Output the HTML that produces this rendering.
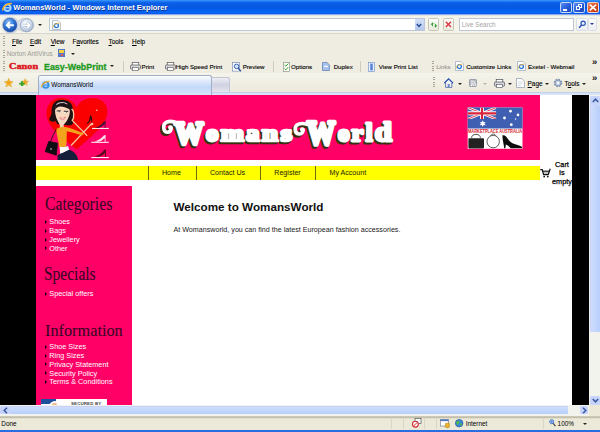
<!DOCTYPE html>
<html>
<head>
<meta charset="utf-8">
<title>WomansWorld - Windows Internet Explorer</title>
<style>
*{margin:0;padding:0;box-sizing:border-box;}
html,body{width:600px;height:432px;overflow:hidden;background:#ece9d8;}
body{font-family:"Liberation Sans",sans-serif;position:relative;}
.abs{position:absolute;}
.t{position:absolute;white-space:nowrap;line-height:10px;height:10px;}
svg{position:absolute;overflow:visible;}
/* ---------- browser chrome ---------- */
#titlebar{left:0;top:0;width:600px;height:14.5px;background:linear-gradient(#3d9bff 0%,#1f7af2 9%,#0a5ee4 20%,#0758e2 48%,#0660f0 70%,#0668f8 86%,#0a4cdc 94%,#0a3ccc 100%);}
#titletext{left:13.2px;top:3.4px;font-size:7.52px;font-weight:bold;color:#fff;text-shadow:0.5px 0.5px 0 #0a2a80;}
#navbar{left:0;top:14px;width:600px;height:19px;background:linear-gradient(#5c7fe0 0,#c9d3ee 1px,#f5f4ea 2px,#f5f4ea 100%);}
#navline{left:0;top:33px;width:600px;height:1px;background:#d8d6cc;}
#menubar{left:0;top:34px;width:600px;height:39px;background:#efede2;}
#tabbar{left:0;top:73px;width:600px;height:22px;background:linear-gradient(#f5f4ec,#ebe8d8);}
.menu{font-size:6.4px;color:#000;top:37px;-webkit-text-stroke:0.12px currentColor;}
.tb{font-size:6.15px;color:#000;top:61.5px;-webkit-text-stroke:0.12px currentColor;}
.tb2{font-size:6.4px;color:#000;top:78.5px;-webkit-text-stroke:0.12px currentColor;}
/* ---------- page ---------- */
#page{left:0;top:95px;width:589px;height:310px;background:#000;overflow:hidden;}
#white{left:36px;top:0;width:536px;height:311px;background:#fff;}
#header{left:36px;top:0;width:504.4px;height:65px;background:#ff0066;}
#yellow{left:36px;top:71px;width:504.4px;height:14px;background:#ffff00;}
#side{left:36px;top:91px;width:96px;height:221px;background:#ff0066;}
.nav{font-size:7.1px;color:#1a1a00;top:73px;}
.sep{position:absolute;top:71px;width:1px;height:14px;background:#6e6e10;}
.li{font-size:7.3px;color:#fff;left:49.3px;}
.bul{position:absolute;left:45px;width:0;height:0;border-left:2.5px solid #20000c;border-top:2.2px solid transparent;border-bottom:2.2px solid transparent;}
.h{-webkit-text-stroke:0.12px #3a0626;position:absolute;font-family:"Liberation Serif",serif;color:#3a0626;left:44.5px;white-space:nowrap;transform-origin:0 0;line-height:20px;height:20px;}
/* ---------- bottom ---------- */
#hscroll{left:0;top:405px;width:600px;height:11px;background:#f3f3ee;}
#vscroll{left:589px;top:95px;width:11px;height:311px;background:#f3f3ee;}
#status{left:0;top:415.5px;width:600px;height:14.5px;background:linear-gradient(#d9d6c6 0,#b9b5a2 1.2px,#dcd9c8 2.2px,#ece9d8 3px);}
#taskblue{left:0;top:430px;width:600px;height:2px;background:#2a6de2;}
</style>
</head>
<body>
<!--CHROME-TOP-->
<div id="titlebar" class="abs"></div>
<svg style="left:1.5px;top:2px" width="10.5" height="10.5" viewBox="0 0 10 10"><circle cx="5.2" cy="5.4" r="3.1" fill="none" stroke="#a8d4ff" stroke-width="1.9"/><path d="M2.4 5.5 H8.2" stroke="#a8d4ff" stroke-width="1.3"/><path d="M6.2 6.4 H9.4 V9 H6.2Z" fill="none"/><path d="M0.8 8.2 C0.2 5 4 1.2 9.4 1.4" fill="none" stroke="#f2b326" stroke-width="1.3"/></svg>
<div id="titletext" class="t">WomansWorld - Windows Internet Explorer</div>
<div class="abs" style="left:560.4px;top:1.6px;width:11.4px;height:11.7px;border-radius:2.2px;border:0.8px solid rgba(255,255,255,0.75);background:linear-gradient(135deg,#5a8cf2,#2a60dc 50%,#1a44b4);"></div>
<div class="abs" style="left:562.6px;top:8.5px;width:4.6px;height:2px;background:#fff;"></div>
<div class="abs" style="left:573.3px;top:1.6px;width:11.7px;height:11.7px;border-radius:2.2px;border:0.8px solid rgba(255,255,255,0.75);background:linear-gradient(135deg,#5a8cf2,#2a60dc 50%,#1a44b4);"></div>
<div class="abs" style="left:578.2px;top:4.4px;width:4.2px;height:3.8px;border:0.8px solid #fff;border-top-width:1.3px;"></div>
<div class="abs" style="left:576.2px;top:6.3px;width:4.2px;height:3.9px;border:0.8px solid #fff;border-top-width:1.3px;background:#2e60d8;"></div>
<div class="abs" style="left:586.7px;top:1.6px;width:12px;height:11.7px;border-radius:2.2px;border:0.8px solid rgba(255,255,255,0.75);background:linear-gradient(135deg,#f08a60,#de4e22 50%,#b8340e);"></div>
<svg style="left:588.6px;top:4px" width="8" height="7" viewBox="0 0 8 7"><path d="M0.8 0.6 L7.2 6.4 M7.2 0.6 L0.8 6.4" stroke="#fff" stroke-width="1.6"/></svg>
<div id="navbar" class="abs"></div><div id="navline" class="abs"></div>
<svg style="left:1px;top:16px" width="44" height="18" viewBox="1 16 44 18"><defs><radialGradient id="bk" cx="0.4" cy="0.3" r="0.8"><stop offset="0" stop-color="#9cc8f8"/><stop offset="0.45" stop-color="#2f78dc"/><stop offset="1" stop-color="#123c9a"/></radialGradient><radialGradient id="fw" cx="0.4" cy="0.3" r="0.8"><stop offset="0" stop-color="#f6f9fd"/><stop offset="0.5" stop-color="#d3deee"/><stop offset="1" stop-color="#9fb2cf"/></radialGradient></defs><path d="M10 17.2 C15 17.2 17.5 20 18.3 21.4 C19.5 19.4 22.5 18.2 26.5 18.2 C31 18.2 33.8 21.4 33.8 25 C33.8 28.8 31 31.8 26.5 31.8 C22.8 31.8 19.6 30.4 18.3 28.8 C17.4 30.6 14.6 33 10 33 C5.4 33 2.2 29.6 2.2 25.2 C2.2 20.6 5.4 17.2 10 17.2Z" fill="#d6dce8" stroke="#b5bdcc" stroke-width="0.6"/><circle cx="10" cy="25.1" r="6.9" fill="url(#bk)" stroke="#24509e" stroke-width="0.6"/><path d="M13.8 25.2 H7.2 M9.8 22.2 L6.8 25.2 L9.8 28.2" fill="none" stroke="#fff" stroke-width="1.9" stroke-linejoin="miter"/><circle cx="26.7" cy="25.3" r="6.4" fill="url(#fw)" stroke="#93a3bc" stroke-width="0.8"/><path d="M23 25.3 H29.6 M27 22.5 L29.8 25.3 L27 28.1" fill="none" stroke="#a8b6cc" stroke-width="2.6"/><path d="M23 25.3 H29.6 M27 22.5 L29.8 25.3 L27 28.1" fill="none" stroke="#fff" stroke-width="1.6"/></svg>
<div class="abs" style="left:37.8px;top:24px;width:0;height:0;border-left:2.0px solid transparent;border-right:2.0px solid transparent;border-top:2.0px solid #222;"></div>
<div class="abs" style="left:49px;top:18px;width:376px;height:13px;background:#fff;border:1px solid #bcc6d8;"></div>
<svg style="left:51.5px;top:19.8px" width="9" height="10" viewBox="0 0 9 10"><path d="M0.5 0.5 H6 L8.5 3 V9.5 H0.5Z" fill="#fff" stroke="#9aa6bc" stroke-width="0.7"/><circle cx="4.4" cy="5.6" r="2" fill="none" stroke="#2f7bd8" stroke-width="1.4"/><path d="M1.2 7.6 C1 5 3.6 3 7.4 3.2" fill="none" stroke="#f2b326" stroke-width="0.8"/></svg>
<div class="abs" style="left:414.6px;top:19px;width:9.6px;height:11px;background:linear-gradient(#d4e0f8,#b4c8ee);"></div>
<svg style="left:416.4px;top:22.6px" width="6" height="5" viewBox="0 0 6 5"><path d="M0.8 1 L3 3.4 L5.2 1" fill="none" stroke="#264a96" stroke-width="1.4"/></svg>
<div class="abs" style="left:427.5px;top:18px;width:11.8px;height:13px;background:linear-gradient(#fdfdfb,#ebe9df);border:1px solid #c8c5b5;border-radius:1.5px;"></div>
<svg style="left:429.5px;top:20.5px" width="8" height="8" viewBox="0 0 8 8"><path d="M0.6 4.2 L2.2 1.2 L3.8 3 L2.8 3.2 C2.8 4.4 3.2 5 3.8 5.6 C2.4 5.4 1.8 4.8 1.6 3.6Z" fill="#2aa12e"/><path d="M7.4 3.8 L5.8 6.8 L4.2 5 L5.2 4.8 C5.2 3.6 4.8 3 4.2 2.4 C5.6 2.6 6.2 3.2 6.4 4.4Z" fill="#2aa12e"/></svg>
<div class="abs" style="left:442.5px;top:18px;width:11.8px;height:13px;background:linear-gradient(#fdfdfb,#ebe9df);border:1px solid #c8c5b5;border-radius:1.5px;"></div>
<svg style="left:445.2px;top:21.3px" width="7" height="7" viewBox="0 0 7 7"><path d="M0.8 0.8 L6 6 M6 0.8 L0.8 6" stroke="#d8303a" stroke-width="1.3"/></svg>
<div class="abs" style="left:459px;top:18px;width:114.5px;height:13px;background:#fff;border:1px solid #bcc6d8;"></div>
<div class="t" style="left:461.8px;top:19.7px;font-size:6.4px;color:#a4a4a4;">Live Search</div>
<div class="abs" style="left:576.2px;top:18px;width:11.8px;height:12.6px;background:linear-gradient(#fbfbfa,#eceef4);border:1px solid #d9dde8;border-radius:1.5px;"></div>
<svg style="left:578.2px;top:20.3px" width="8.6" height="8.6" viewBox="0 0 8 8"><circle cx="4.8" cy="3" r="2" fill="#eaf2ff" stroke="#2a52b8" stroke-width="1.1"/><path d="M3.4 4.6 L1 7.2" stroke="#2a52b8" stroke-width="1.4"/></svg>
<div class="abs" style="left:588px;top:18px;width:8.8px;height:12.6px;background:linear-gradient(#fbfbfa,#eceef4);border:1px solid #d9dde8;border-radius:1.5px;"></div>
<div class="abs" style="left:590.2px;top:23.4px;width:0;height:0;border-left:2.2px solid transparent;border-right:2.2px solid transparent;border-top:2.2px solid #2a3a8a;"></div>
<div id="menubar" class="abs"></div>
<div class="abs" style="left:3px;top:36px;width:1.5px;height:10px;background:repeating-linear-gradient(#a8a592 0 1px,transparent 1px 2.3px);"></div>
<div class="abs" style="left:3px;top:50px;width:1.5px;height:8px;background:repeating-linear-gradient(#a8a592 0 1px,transparent 1px 2.3px);"></div>
<div class="abs" style="left:3px;top:61px;width:1.5px;height:10px;background:repeating-linear-gradient(#a8a592 0 1px,transparent 1px 2.3px);"></div>
<div class="t menu" style="left:12px"><u>F</u>ile</div>
<div class="t menu" style="left:29.9px"><u>E</u>dit</div>
<div class="t menu" style="left:50.7px"><u>V</u>iew</div>
<div class="t menu" style="left:72.5px">F<u>a</u>vorites</div>
<div class="t menu" style="left:108.5px"><u>T</u>ools</div>
<div class="t menu" style="left:132px"><u>H</u>elp</div>
<div class="t" style="left:6.7px;top:48.6px;font-size:6.4px;color:#9a9a92;">Norton AntiVirus</div>
<div class="abs" style="left:57.5px;top:49.3px;width:7.8px;height:7.8px;background:#f3d23a;border:0.8px solid #5a78c8;"></div>
<div class="abs" style="left:58.6px;top:53.2px;width:5.6px;height:3.2px;background:#5a78c8;"></div>
<div class="abs" style="left:60.6px;top:53.8px;width:2.6px;height:2px;background:#e85a4a;"></div>
<div class="abs" style="left:70.5px;top:52.8px;width:0;height:0;border-left:2.0px solid transparent;border-right:2.0px solid transparent;border-top:2.0px solid #222;"></div>
<div class="t" style="left:9.3px;top:60.7px;font-size:8.8px;font-weight:bold;color:#dc1420;font-family:'Liberation Serif',serif;-webkit-text-stroke:0.4px #dc1420;transform:scaleX(1.17);transform-origin:0 0;">Canon</div>
<div class="t" style="left:44px;top:61.8px;font-size:8.9px;font-weight:bold;color:#1e9a22;-webkit-text-stroke:0.3px #1e9a22;">Easy-WebPrint</div>
<div class="abs" style="left:110px;top:65px;width:0;height:0;border-left:2.0px solid transparent;border-right:2.0px solid transparent;border-top:2.0px solid #222;"></div>
<div class="abs" style="left:122.5px;top:60.5px;width:1px;height:11px;background:#cfccbc;"></div>
<svg style="left:130px;top:62px" width="11" height="9" viewBox="0 0 11 9"><rect x="2.2" y="0.5" width="6.6" height="3.4" fill="#fff" stroke="#555" stroke-width="0.7"/><rect x="0.5" y="3" width="10" height="4.2" rx="1" fill="#d8d8dc" stroke="#555" stroke-width="0.7"/><rect x="2.4" y="5.4" width="6.2" height="3" fill="#fff" stroke="#555" stroke-width="0.6"/></svg>
<div class="t tb" style="left:141.6px">Print</div>
<svg style="left:164.6px;top:62px" width="11" height="9" viewBox="0 0 11 9"><rect x="2.2" y="0.5" width="6.6" height="3.4" fill="#fff" stroke="#555" stroke-width="0.7"/><rect x="0.5" y="3" width="10" height="4.2" rx="1" fill="#d8d8dc" stroke="#555" stroke-width="0.7"/><rect x="2.4" y="5.4" width="6.2" height="3" fill="#fff" stroke="#555" stroke-width="0.6"/></svg>
<div class="t tb" style="left:175.7px">High Speed Print</div>
<svg style="left:231.5px;top:61.5px" width="10" height="10" viewBox="0 0 10 10"><rect x="0.5" y="0.5" width="7" height="8.6" fill="#fff" stroke="#7890b8" stroke-width="0.7"/><circle cx="4.6" cy="4.4" r="2.3" fill="#cfe4fa" stroke="#2a52a8" stroke-width="0.9"/><path d="M6.2 6.2 L9 9.2" stroke="#2a52a8" stroke-width="1.3"/></svg>
<div class="t tb" style="left:242.7px">Preview</div>
<div class="abs" style="left:272.5px;top:60.5px;width:1px;height:11px;background:#cfccbc;"></div>
<svg style="left:282.7px;top:61.5px" width="7" height="10" viewBox="0 0 7 10"><rect x="0.4" y="0.4" width="6.2" height="9.2" fill="#fdfdf4" stroke="#8c968c" stroke-width="0.7"/><path d="M1.6 3 L2.8 4.2 L5.2 1.6 M1.6 6.6 L2.8 7.8 L5.2 5.2" fill="none" stroke="#2a9a2e" stroke-width="1"/></svg>
<div class="t tb" style="left:291px">Options</div>
<svg style="left:322px;top:61.8px" width="8" height="9" viewBox="0 0 8 9"><path d="M0.5 0.5 H5 L7.4 2.8 V8.5 H0.5Z" fill="#a8c4ec" stroke="#5878b0" stroke-width="0.7"/><path d="M2 4.4 H6" stroke="#fff" stroke-width="1"/></svg>
<div class="t tb" style="left:333.7px">Duplex</div>
<div class="abs" style="left:360px;top:60.5px;width:1px;height:11px;background:#cfccbc;"></div>
<svg style="left:368px;top:61.5px" width="7" height="10" viewBox="0 0 7 10"><rect x="0.4" y="0.4" width="6.2" height="9.2" fill="#e8f0fc" stroke="#7c98cc" stroke-width="0.7"/><rect x="2.2" y="1.6" width="2.6" height="6.8" fill="#5a84d4"/></svg>
<div class="t tb" style="left:378.8px">View Print List</div>
<div class="abs" style="left:432px;top:61px;width:1.5px;height:10px;background:repeating-linear-gradient(#a8a592 0 1px,transparent 1px 2.3px);"></div>
<div class="t tb" style="left:436.2px;color:#9a9a92">Links</div>
<svg style="left:454.6px;top:61.4px" width="9" height="10" viewBox="0 0 9 10"><path d="M0.5 0.5 H6 L8.5 3 V9.5 H0.5Z" fill="#fff" stroke="#9aa6bc" stroke-width="0.7"/><circle cx="4.4" cy="5.6" r="2" fill="none" stroke="#2f7bd8" stroke-width="1.4"/><path d="M1.2 7.6 C1 5 3.6 3 7.4 3.2" fill="none" stroke="#f2b326" stroke-width="0.8"/></svg>
<div class="t tb" style="left:466.2px">Customize Links</div>
<svg style="left:516.6px;top:61.4px" width="9" height="10" viewBox="0 0 9 10"><path d="M0.5 0.5 H6 L8.5 3 V9.5 H0.5Z" fill="#fff" stroke="#9aa6bc" stroke-width="0.7"/><circle cx="4.4" cy="5.6" r="2" fill="none" stroke="#2f7bd8" stroke-width="1.4"/><path d="M1.2 7.6 C1 5 3.6 3 7.4 3.2" fill="none" stroke="#f2b326" stroke-width="0.8"/></svg>
<div class="t tb" style="left:528px">Exetel - Webmail</div>
<div class="t" style="left:592px;top:56.8px;font-size:9.5px;font-weight:bold;color:#111;letter-spacing:-0.9px">»</div>
<div id="tabbar" class="abs"></div>
<div class="abs" style="left:0;top:92px;width:600px;height:3.2px;background:linear-gradient(#b4c2e0 0,#d2e0f7 35%,#dbe6f9 100%);"></div>
<svg style="left:4.2px;top:77.8px" width="9.4" height="9.6" viewBox="0 0 10 10" preserveAspectRatio="none"><defs><radialGradient id="sg"><stop offset="0" stop-color="#f29a18"/><stop offset="0.55" stop-color="#f6b828"/><stop offset="1" stop-color="#f8d860"/></radialGradient></defs><path d="M5 0.4 L6.3 3.5 L9.7 3.8 L7.1 6 L7.9 9.3 L5 7.5 L2.1 9.3 L2.9 6 L0.3 3.8 L3.7 3.5Z" fill="url(#sg)" stroke="#d8a030" stroke-width="0.6" stroke-linejoin="round"/></svg>
<svg style="left:19.4px;top:77.8px" width="9.8" height="9.6" viewBox="0 0 10 10" preserveAspectRatio="none"><path d="M5 0.4 L6.3 3.5 L9.7 3.8 L7.1 6 L7.9 9.3 L5 7.5 L2.1 9.3 L2.9 6 L0.3 3.8 L3.7 3.5Z" transform="translate(2.6 0.2) scale(0.74 0.82)" fill="url(#sg)" stroke="#d8a030" stroke-width="0.6" stroke-linejoin="round"/><path d="M0.3 5.9 H5.7 M3 3.4 V8.4" stroke="#3aa82e" stroke-width="2.1"/></svg>
<div class="abs" style="left:37.5px;top:75.3px;width:174.8px;height:19.9px;border:1px solid #a2aec8;border-bottom:none;border-radius:2.5px 2.5px 0 0;background:linear-gradient(#fbfdff 0%,#dfeafb 28%,#c3d9f8 58%,#cfe0fa 85%,#d8e6fb 100%);"></div>
<svg style="left:40.6px;top:80px" width="9.2" height="9.2" viewBox="0 0 10 10"><circle cx="5.2" cy="5.4" r="3.1" fill="none" stroke="#348fe6" stroke-width="1.9"/><path d="M2.4 5.5 H8.2" stroke="#348fe6" stroke-width="1.3"/><path d="M6.2 6.4 H9.4 V9 H6.2Z" fill="none"/><path d="M0.8 8.2 C0.2 5 4 1.2 9.4 1.4" fill="none" stroke="#f2b326" stroke-width="1.3"/></svg>
<div class="t" style="left:51.3px;top:79.7px;font-size:6.4px;color:#000;">WomansWorld</div>
<div class="abs" style="left:212.3px;top:77.2px;width:17.4px;height:15px;border:1px solid #c2c6d6;border-bottom:none;border-left:none;border-radius:0 2.5px 0 0;background:linear-gradient(#eeeef4 0%,#d0d1e2 50%,#e4e5ee 100%);"></div>
<div class="abs" style="left:433px;top:77px;width:1.5px;height:12px;background:repeating-linear-gradient(#a8a592 0 1px,transparent 1px 2.3px);"></div>
<svg style="left:444px;top:78px" width="9.5" height="10" viewBox="0 0 9.5 10"><path d="M0.4 5 L4.6 0.8 L9 5 H7.8 V9.4 H1.6 V5Z" fill="#f2f4f8" stroke="#4a62a0" stroke-width="0.8"/><path d="M0.4 5 L4.6 0.8 L9 5" fill="none" stroke="#2f56b0" stroke-width="1.2"/><rect x="3.7" y="6" width="2" height="3.4" fill="#6a88c8"/></svg>
<div class="abs" style="left:458px;top:82.6px;width:0;height:0;border-left:2.0px solid transparent;border-right:2.0px solid transparent;border-top:2.0px solid #222;"></div>
<div class="abs" style="left:469px;top:79.2px;width:7.8px;height:7.8px;background:#b9bdc4;border:0.7px solid #9aa0aa;border-radius:1.2px;"></div>
<svg style="left:469.6px;top:79.8px" width="7" height="7" viewBox="0 0 7 7"><circle cx="1.6" cy="5.4" r="0.8" fill="#fff"/><path d="M1 3 A3 3 0 0 1 4 6 M1 1 A5 5 0 0 1 6 6" fill="none" stroke="#fff" stroke-width="0.8"/></svg>
<div class="abs" style="left:483.4px;top:82.6px;width:0;height:0;border-left:2.0px solid transparent;border-right:2.0px solid transparent;border-top:2.0px solid #b4b4b0;"></div>
<svg style="left:493.5px;top:78.8px" width="11" height="9" viewBox="0 0 11 9"><rect x="2.2" y="0.5" width="6.6" height="3.4" fill="#fff" stroke="#4a5058" stroke-width="0.7"/><rect x="0.5" y="3" width="10" height="4.2" rx="1" fill="#d8d8dc" stroke="#4a5058" stroke-width="0.7"/><rect x="2.4" y="5.4" width="6.2" height="3" fill="#fff" stroke="#4a5058" stroke-width="0.6"/></svg>
<div class="abs" style="left:508.4px;top:82.6px;width:0;height:0;border-left:2.0px solid transparent;border-right:2.0px solid transparent;border-top:2.0px solid #222;"></div>
<svg style="left:516.4px;top:78px" width="9" height="10" viewBox="0 0 9 10"><path d="M0.5 0.5 H5.6 L8.4 3.2 V9.5 H0.5Z" fill="#fff" stroke="#8a96ac" stroke-width="0.7"/><path d="M2 4 H6.6 M2 5.8 H6.6 M2 7.6 H5" stroke="#b8c4d8" stroke-width="0.6"/></svg>
<div class="t tb2" style="left:527.6px"><u>P</u>age</div>
<div class="abs" style="left:545.4px;top:82.6px;width:0;height:0;border-left:2.0px solid transparent;border-right:2.0px solid transparent;border-top:2.0px solid #222;"></div>
<svg style="left:553px;top:78.2px" width="10" height="10" viewBox="0 0 10 10"><circle cx="5" cy="5" r="3.4" fill="#d6deec" stroke="#7e8eac" stroke-width="1.8" stroke-dasharray="1.5 1.17"/><circle cx="5" cy="5" r="3" fill="#c4d0e4" stroke="#6f80a0" stroke-width="0.7"/><circle cx="5" cy="5" r="1.2" fill="#f4f6fa"/></svg>
<div class="t tb2" style="left:564.5px">T<u>o</u>ols</div>
<div class="abs" style="left:582.2px;top:82.6px;width:0;height:0;border-left:2.0px solid transparent;border-right:2.0px solid transparent;border-top:2.0px solid #222;"></div>
<div class="t" style="left:592px;top:72.6px;font-size:9.5px;font-weight:bold;color:#111;letter-spacing:-0.9px">»</div>
<!--/CHROME-TOP-->

<div id="page" class="abs">
  <div id="white" class="abs"></div>
  <div id="header" class="abs"></div>
  <!--HEADER-ART-->
  <!--ART-START--><svg id="art" style="left:0;top:0" width="589" height="65" viewBox="0 95 589 65">
<!-- heart -->
<path d="M77 149.5 C64 139 46 128 46.5 112.5 C46.5 103 54 97.6 62 98 C69 98.3 74.5 102 76.5 107.5 C79 101.5 86 97.6 93.5 98 C102 98.4 107.6 104 107.3 112 C106.8 127 88 138 77 149.5 Z" fill="#fb0000"/>
<circle cx="96.7" cy="110.2" r="0.8" fill="#ffd0c0"/>
<!-- shelves -->
<g stroke="#fff" stroke-width="1"><path d="M92 128.4 H108.8 M91.3 142.3 H108.8 M91.3 157.6 H108.8"/></g>
<!-- shoes on shelves -->
<path d="M94.8 127.6 C98 127 101.3 125 104.2 121.2 L105.6 120.9 L105.5 127.9 L104.7 127.9 L104.6 124 C102.6 126.2 100.2 127.7 97.8 127.9 Z" fill="#4a1038"/>
<path d="M94.3 141.6 C97.5 141 101 139 104 135.3 L105.6 135 L105.5 141.9 L104.7 141.9 L104.6 138 C102.6 140.2 100.2 141.6 97.8 141.8 Z" fill="#fbe3ee"/>
<path d="M94.3 156.6 C97.6 156 101.2 153.8 104.4 149.8 L106 149.5 L105.9 157 L105.1 157 L105 153 C102.8 155.2 100.4 156.7 97.8 156.9 Z" fill="#5a0c1c"/>
<!-- hair back -->
<path d="M62 99.8 C56 99.6 52 103.6 51.6 109.6 C51.4 113 51.8 115 50.2 116.8 C48.6 118.6 49.2 121 51.8 121.6 C53.6 122 54.8 121.8 55.8 121 L57 124 L70 125.4 C72.6 125 73.6 123 73.2 120 C72.8 116 73.2 111 72.6 107.4 C71.8 102.8 68 100 62 99.8 Z" fill="#1e1215"/>
<!-- neck -->
<path d="M59.6 122 L63 122.6 L64.4 129 L60 129.4 Z" fill="#f3c7a6"/>
<!-- face -->
<path d="M55 109.8 C55.2 105.6 58.6 104 62.2 104.2 C66.4 104.4 69.6 106.8 69.8 111 C70 116 67 122 62.8 125.4 C61.6 126.2 60.6 126 59.8 124.8 C57 120.6 54.8 115 55 109.8 Z" fill="#f8d9c0"/>
<!-- hair highlight -->
<path d="M56.8 104.4 C59 102.2 64.4 101.8 66.8 104" fill="none" stroke="#c9c3c6" stroke-width="1.2" stroke-linecap="round"/>
<!-- fringe -->
<path d="M54.8 110.6 C56 106.4 61 104.2 70 109.6 C69.6 105.4 66.4 103.2 62.2 103.2 C57.8 103.2 54.8 106.2 54.8 110.6 Z" fill="#1e1215"/>
<!-- eyes, mouth -->
<ellipse cx="58.8" cy="111.6" rx="1.5" ry="0.9" fill="#fff"/><ellipse cx="66" cy="112" rx="1.6" ry="0.9" fill="#fff"/>
<path d="M57.2 111 L60.4 110.8 M64.2 111.2 L67.8 111.4" stroke="#1e1215" stroke-width="0.9" stroke-linecap="round"/>
<circle cx="59.2" cy="111.7" r="0.6" fill="#2a4a30"/><circle cx="66.4" cy="112.1" r="0.6" fill="#2a4a30"/>
<path d="M59.8 117.6 C61.4 118.6 63.8 118.6 65.4 117 C65 120 61.4 121 59.8 117.6 Z" fill="#fff" stroke="#d8303c" stroke-width="0.5"/>
<!-- phone arm: hand at ear then forearm to elbow -->
<path d="M72 109.4 C73.6 110.6 74 114 73.4 118.4 L72.2 120.4 L86.8 135.4" fill="none" stroke="#f3c6a0" stroke-width="1.35" stroke-linecap="round" stroke-linejoin="round"/>
<!-- other arm with shoe -->
<path d="M91.6 123.6 L71.5 145" fill="none" stroke="#f3c6a0" stroke-width="1.35" stroke-linecap="round"/>
<path d="M90.4 124.6 L93 122.6 L93.4 124.4 L91.6 125.6Z" fill="#f6cfae"/>
<!-- top (orange) -->
<path d="M56.2 129 C58.6 127.2 62.4 126.6 65 127 C70 127.8 76 130 82.6 133 L83.4 134.6 L82.4 135.2 C77 133.8 71 132 66.8 131.2 C66.6 136 66.8 141.6 66.2 146.6 C63.6 147.6 60.8 147.6 59.2 147 C58.8 141 56.4 135 56.2 129 Z" fill="#f2a51c"/>
<!-- held shoe -->
<path d="M86.4 123.4 C88.2 122.6 89.6 120.2 89.8 116.8 L90.6 115 L91.6 116.2 C92.2 118.6 92.4 120.8 92.2 122.4 L91.5 122.4 C91.5 121 91.3 119.8 90.9 119 C90.3 121.4 88.8 123.2 86.9 124 Z" fill="#261018"/>
<!-- belly -->
<path d="M59.6 146.4 C62 147.4 65.4 147.2 68 146 L69.6 151 L60.2 154.6 Z" fill="#fff"/>
<!-- jeans -->
<path d="M57.5 155 C61 153.6 66 151.4 69 149.8 C74 151 77.4 155.4 78.2 160 L57.6 160 Z" fill="#16203a"/>
<!-- bag strap -->
<path d="M56.3 129.3 C54 133 51.8 137.6 50.5 142" fill="none" stroke="#20161a" stroke-width="0.9"/>
<!-- bag -->
<path d="M48.75 141.4 L57.5 143.2 L56.3 155.2 L45.2 151.6 Z" fill="#100e12" stroke="#100e12" stroke-width="0.8" stroke-linejoin="round"/>
<rect x="50.4" y="148.2" width="1.3" height="1.6" fill="#bbb"/>
</svg><svg id="flag" style="left:0;top:0" width="589" height="65" viewBox="0 95 589 65">
<rect x="467.7" y="107.5" width="54.8" height="41.3" fill="#fff"/>
<rect x="467.7" y="107.5" width="54.8" height="21" fill="#3f5fb2"/>
<!-- union jack -->
<g>
<clipPath id="uj"><rect x="467.7" y="107.5" width="28.6" height="11.6"/></clipPath>
<g clip-path="url(#uj)">
<rect x="467.7" y="107.5" width="28.6" height="11.6" fill="#3f5fb2"/>
<path d="M467.7 107.5 L496.3 119.1 M496.3 107.5 L467.7 119.1" stroke="#fff" stroke-width="2.6"/>
<path d="M467.7 107.5 L496.3 119.1 M496.3 107.5 L467.7 119.1" stroke="#d8243a" stroke-width="0.9"/>
<path d="M482 107.5 V119.1 M467.7 113.3 H496.3" stroke="#fff" stroke-width="4"/>
<path d="M482 107.5 V119.1 M467.7 113.3 H496.3" stroke="#d8243a" stroke-width="2.2"/>
</g></g>
<!-- stars -->
<g fill="#fff">
<path d="M482.7 120.3 l0.9 1.9 2.1-0.3 -1.3 1.6 1.3 1.7 -2.1-0.3 -0.9 1.9 -0.9-1.9 -2.1 0.3 1.3-1.7 -1.3-1.6 2.1 0.3z"/>
<circle cx="510.5" cy="111.2" r="1.4"/><circle cx="518" cy="114.9" r="1.3"/><circle cx="504.5" cy="118" r="1.4"/><circle cx="511.3" cy="124.7" r="1.4"/><circle cx="515.6" cy="119" r="0.7"/>
</g>
<!-- red text band -->
<text x="468" y="132.6" font-family="Liberation Sans" font-weight="bold" font-size="4.9" fill="#d8202c" textLength="54.2" lengthAdjust="spacingAndGlyphs">MARKETPLACE AUSTRALIA</text>
<!-- bag -->
<path d="M471.6 137.8 C471.6 133.2 480.4 133.2 480.4 137.8" fill="none" stroke="#222" stroke-width="0.8"/>
<rect x="468.4" y="138.2" width="15.6" height="10.2" rx="0.8" fill="#222"/>
<!-- necklace -->
<circle cx="493.2" cy="141.6" r="6.2" fill="none" stroke="#333" stroke-width="0.8"/>
<path d="M490.6 135.6 C492 133.6 494.6 133.6 495.8 135.6" fill="none" stroke="#333" stroke-width="0.8"/>
<!-- shoe -->
<path d="M502.4 135.4 C504.4 134.6 506.4 136.4 507.8 138.8 C510.2 142.8 514 144.4 518.4 145.2 C520.6 145.6 522 146.4 522.4 148.2 L510.6 148.2 C509 146.2 507.4 144.8 505.8 144.4 L505.4 148.2 L504.2 148.2 C503.8 144 502.4 139.6 502.4 135.4 Z" fill="#0c0c0c"/>
</svg><!--ART-END-->
  <!--LOGO-START--><svg id="logo" style="left:0;top:0" width="589" height="65" viewBox="0 95 589 65"><g font-family="Liberation Serif" font-weight="bold" fill="#35330f" stroke="#35330f" stroke-width="3.0" stroke-linejoin="round" style="vector-effect:non-scaling-stroke"><text transform="matrix(0.1435 0 0 0.1590 173.00 146.02)" font-size="200" vector-effect="non-scaling-stroke" stroke-width="4.2">W</text><text transform="matrix(0.1250 0 0 0.1135 204.20 142.87)" font-size="200" vector-effect="non-scaling-stroke">o</text><text transform="matrix(0.1389 0 0 0.1160 218.90 143.10)" font-size="200" vector-effect="non-scaling-stroke">m</text><text transform="matrix(0.1340 0 0 0.1135 244.30 142.87)" font-size="200" vector-effect="non-scaling-stroke">a</text><text transform="matrix(0.1459 0 0 0.1160 259.90 143.10)" font-size="200" vector-effect="non-scaling-stroke">n</text><text transform="matrix(0.1436 0 0 0.1135 278.90 142.87)" font-size="200" vector-effect="non-scaling-stroke">s</text><text transform="matrix(0.1410 0 0 0.1642 305.20 146.21)" font-size="200" vector-effect="non-scaling-stroke" stroke-width="4.2">W</text><text transform="matrix(0.1160 0 0 0.1146 336.10 142.97)" font-size="200" vector-effect="non-scaling-stroke">o</text><text transform="matrix(0.1326 0 0 0.1147 349.70 143.10)" font-size="200" vector-effect="non-scaling-stroke">r</text><text transform="matrix(0.1232 0 0 0.1302 363.90 143.10)" font-size="200" vector-effect="non-scaling-stroke">l</text><text transform="matrix(0.1541 0 0 0.1319 372.90 143.04)" font-size="200" vector-effect="non-scaling-stroke">d</text></g><path d="M173.2 124.2 C167.3 122.2 161.5 124.0 161.9 129.3 C161.9 135.7 168.9 135.9 169.5 130.2" fill="none" stroke="#35330f" stroke-width="3.6" stroke-linecap="round"/><circle cx="168.6" cy="129.7" r="2.4" fill="#35330f"/><path d="M305.2 126.4 C299.1 124.4 293.0 126.2 293.4 131.2 C293.4 137.3 300.8 137.5 301.4 132.1" fill="none" stroke="#35330f" stroke-width="3.6" stroke-linecap="round"/><circle cx="300.5" cy="131.6" r="2.4" fill="#35330f"/><g font-family="Liberation Serif" font-weight="bold" fill="#fff" stroke="#fff" stroke-width="3.0" stroke-linejoin="round" style="vector-effect:non-scaling-stroke"><text transform="matrix(0.1435 0 0 0.1590 174.80 144.02)" font-size="200" vector-effect="non-scaling-stroke" stroke-width="4.2">W</text><text transform="matrix(0.1250 0 0 0.1135 206.00 140.87)" font-size="200" vector-effect="non-scaling-stroke">o</text><text transform="matrix(0.1389 0 0 0.1160 220.70 141.10)" font-size="200" vector-effect="non-scaling-stroke">m</text><text transform="matrix(0.1340 0 0 0.1135 246.10 140.87)" font-size="200" vector-effect="non-scaling-stroke">a</text><text transform="matrix(0.1459 0 0 0.1160 261.70 141.10)" font-size="200" vector-effect="non-scaling-stroke">n</text><text transform="matrix(0.1436 0 0 0.1135 280.70 140.87)" font-size="200" vector-effect="non-scaling-stroke">s</text><text transform="matrix(0.1410 0 0 0.1642 307.00 144.21)" font-size="200" vector-effect="non-scaling-stroke" stroke-width="4.2">W</text><text transform="matrix(0.1160 0 0 0.1146 337.90 140.97)" font-size="200" vector-effect="non-scaling-stroke">o</text><text transform="matrix(0.1326 0 0 0.1147 351.50 141.10)" font-size="200" vector-effect="non-scaling-stroke">r</text><text transform="matrix(0.1232 0 0 0.1302 365.70 141.10)" font-size="200" vector-effect="non-scaling-stroke">l</text><text transform="matrix(0.1541 0 0 0.1319 374.70 141.04)" font-size="200" vector-effect="non-scaling-stroke">d</text></g><path d="M175.0 122.2 C169.1 120.2 163.3 122.0 163.7 127.3 C163.7 133.7 170.8 133.9 171.3 128.2" fill="none" stroke="#fff" stroke-width="3.6" stroke-linecap="round"/><circle cx="170.4" cy="127.6" r="2.4" fill="#fff"/><path d="M307.0 124.4 C300.9 122.4 294.8 124.2 295.2 129.2 C295.2 135.3 302.6 135.5 303.2 130.1" fill="none" stroke="#fff" stroke-width="3.6" stroke-linecap="round"/><circle cx="302.3" cy="129.6" r="2.4" fill="#fff"/></svg><!--LOGO-END-->
  <div id="yellow" class="abs"></div>
  <div class="sep" style="left:148px"></div>
  <div class="sep" style="left:196px"></div>
  <div class="sep" style="left:260px"></div>
  <div class="sep" style="left:315px"></div>
  <div class="t nav" style="left:162px">Home</div>
  <div class="t nav" style="left:210px">Contact Us</div>
  <div class="t nav" style="left:274.3px">Register</div>
  <div class="t nav" style="left:329.5px">My Account</div>
  <svg style="left:540.3px;top:73px" width="11" height="11" viewBox="0 0 11 11"><path d="M2.6 2.6 H9.6 L8.2 6.6 H3.6Z" fill="#c4c4c4"/><path d="M0.3 1.6 H2.2 L3.6 6.6 H8.2 L10.2 0.8" fill="none" stroke="#111" stroke-width="1.25"/><path d="M2.8 3.2 H9.4" stroke="#111" stroke-width="1"/><circle cx="4.2" cy="8.6" r="0.9" fill="#111"/><circle cx="7.8" cy="8.6" r="0.9" fill="#111"/></svg>
  <div class="t" style="left:551px;top:65.7px;width:22px;text-align:center;font-size:7.3px;color:#000;-webkit-text-stroke:0.25px #000;line-height:8.8px;height:26px;white-space:normal;">Cart<br>is<br>empty</div>
  
  <div id="side" class="abs"></div>
  <div class="h" id="h1" style="top:98.6px;font-size:18.5px;transform:scaleX(0.85)">Categories</div>
  <div class="bul" style="top:124.9px"></div><div class="t li" style="top:122.1px">Shoes</div>
  <div class="bul" style="top:133.8px"></div><div class="t li" style="top:131.0px">Bags</div>
  <div class="bul" style="top:142.8px"></div><div class="t li" style="top:140.0px">Jewellery</div>
  <div class="bul" style="top:151.4px"></div><div class="t li" style="top:148.6px">Other</div>
  <div class="h" id="h2" style="top:168.9px;left:43.5px;font-size:18px;transform:scaleX(0.86)">Specials</div>
  <div class="bul" style="top:197.1px"></div><div class="t li" style="top:194.3px">Special offers</div>
  <div class="h" id="h3" style="top:225px;font-size:17.5px;transform:scaleX(0.93)">Information</div>
  <div class="bul" style="top:250.0px"></div><div class="t li" style="top:247.2px">Shoe Sizes</div>
  <div class="bul" style="top:258.6px"></div><div class="t li" style="top:255.8px">Ring Sizes</div>
  <div class="bul" style="top:267.4px"></div><div class="t li" style="top:264.6px">Privacy Statement</div>
  <div class="bul" style="top:276.4px"></div><div class="t li" style="top:273.6px">Security Policy</div>
  <div class="bul" style="top:284.9px"></div><div class="t li" style="top:282.1px">Terms &amp; Conditions</div>
  <div class="abs" style="left:40.5px;top:303.7px;width:66.5px;height:10px;background:#fff;"></div>
  <div class="abs" style="left:40.5px;top:304px;width:15px;height:5px;background:#1f4f9c;"></div>
  <div class="abs" style="left:49px;top:306px;width:12px;height:8px;background:#fff;border-radius:6px 6px 0 0;"></div>
  <div class="abs" style="left:52px;top:308px;width:5px;height:3px;background:#f6b98a;border-radius:2px;"></div>
  <div class="t" style="left:71px;top:305.5px;font-size:4.4px;font-weight:bold;color:#444;line-height:6px;height:6px;letter-spacing:0.15px">SECURED BY</div>
  
  <div class="t" style="left:173.5px;top:105px;font-size:11.7px;font-weight:bold;color:#111;line-height:14px;height:14px;">Welcome to WomansWorld</div>
  <div class="t" style="left:173.5px;top:129.5px;font-size:7.15px;color:#222;">At Womansworld, you can find the latest European fashion accessories.</div>
</div>

<!--CHROME-BOTTOM-->
<div id="vscroll" class="abs"></div>
<div class="abs" style="left:589.5px;top:104.5px;width:10.5px;height:227.5px;background:linear-gradient(90deg,#c2c8f6 0,#cfdcfd 14%,#c4d7fc 50%,#b8cffb 100%);border-radius:1px;"></div>
<div class="abs" style="left:589.5px;top:95.5px;width:10.5px;height:9px;background:#c6d3fb;border-radius:1.5px;"></div>
<svg style="left:591.5px;top:97.5px" width="7" height="5" viewBox="0 0 7 5"><path d="M0.8 4 L3.5 1.2 L6.2 4" fill="none" stroke="#3a5a9e" stroke-width="1.5"/></svg>
<div class="abs" style="left:589.8px;top:395.6px;width:10.2px;height:9.2px;background:#c6d3fb;border-radius:1.5px;"></div>
<svg style="left:591.5px;top:397.8px" width="7" height="5" viewBox="0 0 7 5"><path d="M0.8 1 L3.5 3.8 L6.2 1" fill="none" stroke="#3a5a9e" stroke-width="1.5"/></svg>
<div id="hscroll" class="abs"></div>
<div class="abs" style="left:9.5px;top:406px;width:558.5px;height:8.2px;background:linear-gradient(#c2c8f6 0,#cfdcfd 14%,#c4d7fc 50%,#b8cffb 100%);border-radius:1px;"></div>
<div class="abs" style="left:0;top:406px;width:9.5px;height:8.2px;background:#c6d3fb;border-radius:1.5px;"></div>
<svg style="left:2.5px;top:406.7px" width="5" height="7" viewBox="0 0 5 7"><path d="M4 0.8 L1.2 3.5 L4 6.2" fill="none" stroke="#3a5a9e" stroke-width="1.5"/></svg>
<div class="abs" style="left:580.3px;top:406.3px;width:7.6px;height:8px;background:#c6d3fb;border-radius:1.5px;"></div>
<svg style="left:582px;top:406.9px" width="5" height="7" viewBox="0 0 5 7"><path d="M1 0.8 L3.8 3.5 L1 6.2" fill="none" stroke="#3a5a9e" stroke-width="1.5"/></svg>
<div class="abs" style="left:588.5px;top:405px;width:11.5px;height:11px;background:#ece9d8;"></div>
<div id="status" class="abs"></div><div id="taskblue" class="abs"></div>
<div class="t" style="left:1.3px;top:419.2px;font-size:6.4px;color:#000;">Done</div>
<div class="abs" style="left:391px;top:418.5px;width:1px;height:10px;background:#dad7c6;"></div>
<div class="abs" style="left:403px;top:418.5px;width:1px;height:10px;background:#dad7c6;"></div>
<div class="abs" style="left:424px;top:418.5px;width:1px;height:10px;background:#dad7c6;"></div>
<div class="abs" style="left:435.5px;top:418.5px;width:1px;height:10px;background:#dad7c6;"></div>
<div class="abs" style="left:447px;top:418.5px;width:1px;height:10px;background:#dad7c6;"></div>
<div class="abs" style="left:543px;top:418.5px;width:1px;height:10px;background:#dad7c6;"></div>
<svg style="left:411.5px;top:418.3px" width="10" height="10" viewBox="0 0 10 10"><rect x="3" y="0.6" width="6" height="5" fill="#fff" stroke="#555" stroke-width="0.7"/><circle cx="3.4" cy="6.2" r="2.9" fill="#fff" stroke="#d42a2a" stroke-width="1.1"/><path d="M1.5 8.1 L5.3 4.3" stroke="#d42a2a" stroke-width="1"/></svg>
<svg style="left:440px;top:418.6px" width="10" height="9" viewBox="0 0 10 9"><rect x="0.5" y="0.5" width="8" height="6.6" fill="#fff" stroke="#7c8698" stroke-width="0.7"/><rect x="0.5" y="0.5" width="8" height="1.6" fill="#4a72c4"/><rect x="5.4" y="4.2" width="4" height="4.2" rx="0.6" fill="#f0b42a" stroke="#a87410" stroke-width="0.5"/></svg>
<svg style="left:455px;top:418.8px" width="8.4" height="8.4" viewBox="0 0 10 10"><circle cx="5" cy="5" r="4.5" fill="#3a86dc" stroke="#1c4a9a" stroke-width="0.7"/><path d="M2 3 C3.5 1.6 5 2 5.4 3.4 C5.8 5 4 5.4 3.8 7 C3 7.6 1.4 6 1.2 4.4Z M6.6 5.2 C7.8 4.6 9 5.2 8.6 6.6 C8 8 6.6 8.6 6.2 7.4Z" fill="#4cb84a"/></svg>
<div class="t" style="left:465.7px;top:419.2px;font-size:6.4px;color:#000;">Internet</div>
<svg style="left:549.4px;top:419px" width="7" height="8" viewBox="0 0 7 8"><circle cx="2.7" cy="2.7" r="2" fill="#dcecff" stroke="#2f64c8" stroke-width="0.9"/><path d="M1.5 2.7 H3.9 M2.7 1.5 V3.9" stroke="#2f64c8" stroke-width="0.7"/><path d="M4.2 4.4 L6.4 7.2" stroke="#444" stroke-width="1.2"/></svg>
<div class="t" style="left:557.6px;top:419.2px;font-size:6.4px;color:#000;">100%</div>
<div class="abs" style="left:583px;top:423px;width:0;height:0;border-left:2.0px solid transparent;border-right:2.0px solid transparent;border-top:2.0px solid #222;"></div>
<!--/CHROME-BOTTOM-->
</body>
</html>
